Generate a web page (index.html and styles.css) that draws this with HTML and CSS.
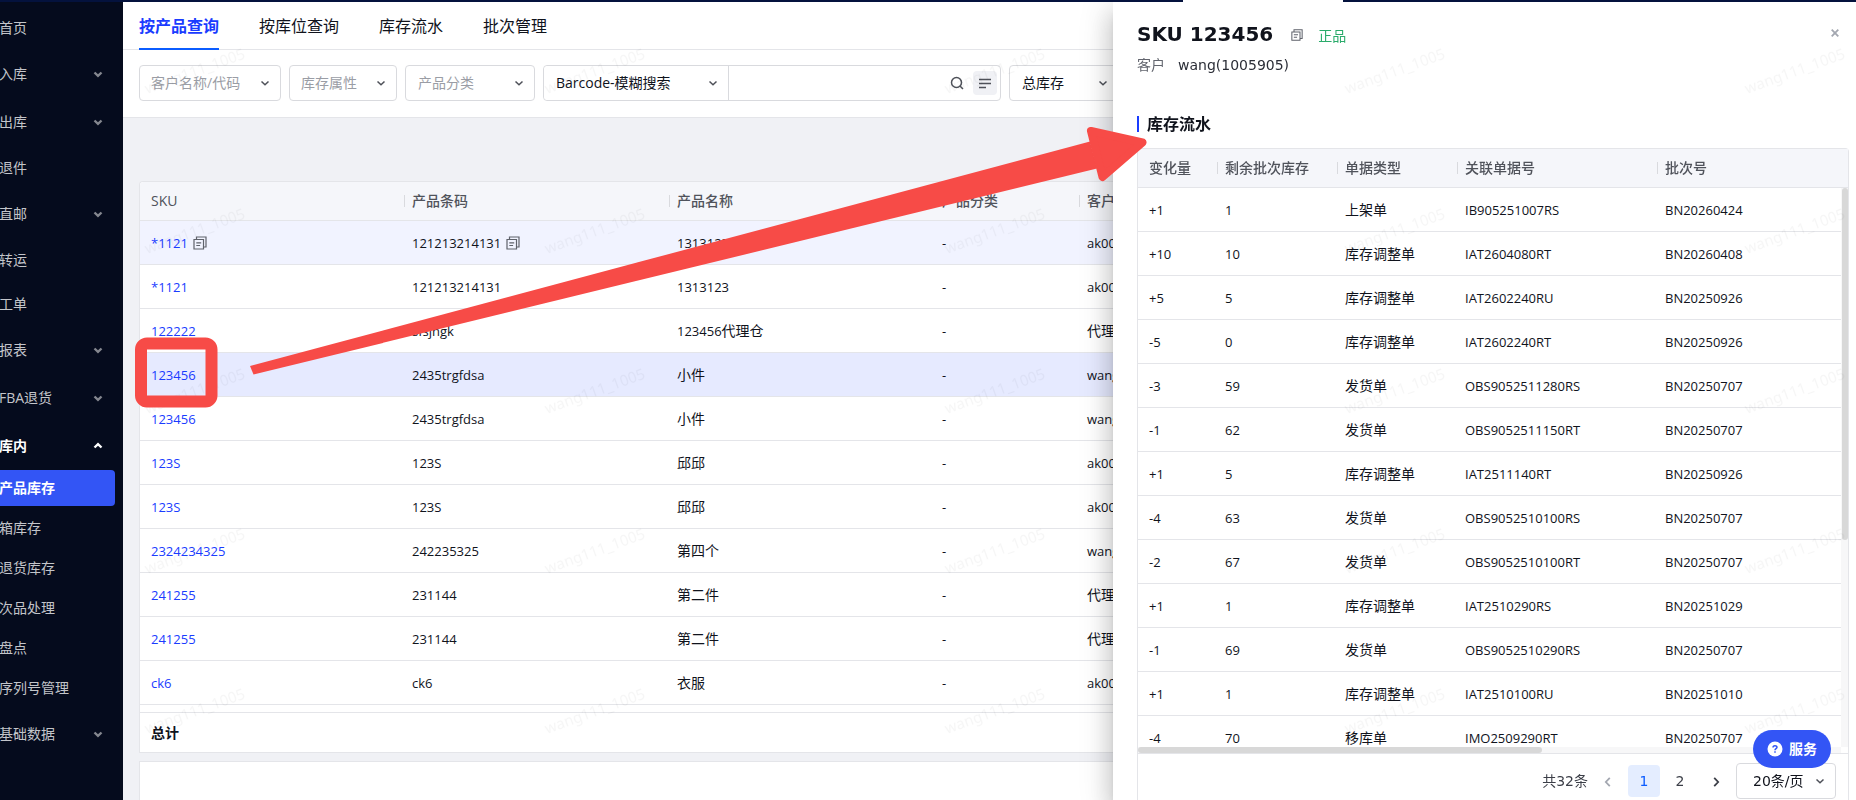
FILE: index.html
```html
<!DOCTYPE html>
<html lang="zh-CN">
<head>
    <meta charset="UTF-8">
    <meta name="viewport" content="width=device-width, initial-scale=1.0">
    <title>产品库存</title>
    <link rel="stylesheet" href="styles.css">
</head>
<body>
    <svg class="sprite" aria-hidden="true">
        <symbol id="down" viewBox="0 0 10 10"><path d="M1.5 3.5 5 6.8 8.5 3.5" fill="none" stroke="currentColor"/></symbol>
        <symbol id="copy" viewBox="0 0 14 14">
            <path d="M1 3.5h9.500v9.500H1zM3.500 3V1H13v10h-2" fill="none" stroke="currentColor" stroke-width="1.2"/>
            <path d="M3.300 6.800h4.900M3.300 9.500h3.800" fill="none" stroke="currentColor" stroke-width="1.2"/>
        </symbol>
    </svg>

    <div class="topbar"><span class="topbar-tab"></span></div>

    <div class="layout">
        <nav class="sidebar">
            <ul class="menu">
                <li class="menu-item"><a href="#">首页</a></li>
                <li class="menu-item has-sub"><a href="#">入库</a><svg><use href="#down"/></svg></li>
                <li class="menu-item has-sub"><a href="#">出库</a><svg><use href="#down"/></svg></li>
                <li class="menu-item"><a href="#">退件</a></li>
                <li class="menu-item has-sub"><a href="#">直邮</a><svg><use href="#down"/></svg></li>
                <li class="menu-item"><a href="#">转运</a></li>
                <li class="menu-item"><a href="#">工单</a></li>
                <li class="menu-item has-sub"><a href="#">报表</a><svg><use href="#down"/></svg></li>
                <li class="menu-item has-sub"><a href="#">FBA退货</a><svg><use href="#down"/></svg></li>
                <li class="menu-item has-sub open"><a href="#">库内</a><svg><use href="#down"/></svg></li>
            </ul>
            <ul class="submenu">
                <li><a class="active" href="#">产品库存</a></li>
                <li><a href="#">箱库存</a></li>
                <li><a href="#">退货库存</a></li>
                <li><a href="#">次品处理</a></li>
                <li><a href="#">盘点</a></li>
                <li><a href="#">序列号管理</a></li>
            </ul>
            <ul class="menu">
                <li class="menu-item has-sub"><a href="#">基础数据</a><svg><use href="#down"/></svg></li>
            </ul>
        </nav>

        <main class="content">
            <div class="tabs">
                <a class="tab active" href="#">按产品查询</a>
                <a class="tab" href="#">按库位查询</a>
                <a class="tab" href="#">库存流水</a>
                <a class="tab" href="#">批次管理</a>
            </div>

            <form class="filters">
                <div class="select customer">
                    <select aria-label="客户名称/代码"><option>客户名称/代码</option></select>
                    <svg><use href="#down"/></svg>
                </div>
                <div class="select attr">
                    <select aria-label="库存属性"><option>库存属性</option></select>
                    <svg><use href="#down"/></svg>
                </div>
                <div class="select category">
                    <select aria-label="产品分类"><option>产品分类</option></select>
                    <svg><use href="#down"/></svg>
                </div>
                <div class="search">
                    <div class="select chosen mode">
                        <select aria-label="搜索方式"><option>Barcode-模糊搜索</option></select>
                        <svg><use href="#down"/></svg>
                    </div>
                    <input type="text" aria-label="搜索">
                    <button type="button" aria-label="搜索">
                        <svg viewBox="0 0 24 24"><circle cx="11.500" cy="11.500" r="5" fill="none" stroke="currentColor" stroke-width="1.5"/><path d="M15 15l3 3" stroke="currentColor" stroke-width="1.5"/></svg>
                    </button>
                    <button type="button" class="multi" aria-label="批量搜索">
                        <svg viewBox="0 0 24 24"><path d="M6 8.500h12M6 12.500h12M6 16.500h7" stroke="currentColor" stroke-width="1.5"/></svg>
                    </button>
                </div>
                <div class="select chosen total-stock">
                    <select aria-label="总库存"><option>总库存</option></select>
                    <svg><use href="#down"/></svg>
                </div>
            </form>

            <div class="panel">
                <table class="grid stock">
                    <colgroup><col class="w265"><col class="w265"><col class="w265"><col class="w145"><col></colgroup>
                    <thead>
                        <tr><th>SKU</th><th>产品条码</th><th>产品名称</th><th>产品分类</th><th>客户</th></tr>
                    </thead>
                    <tbody>
                        <tr class="hover"><td><a href="#">*1121</a><svg class="copy"><use href="#copy"/></svg></td><td>121213214131<svg class="copy"><use href="#copy"/></svg></td><td>1313123</td><td>-</td><td>ak001</td></tr>
                        <tr><td><a href="#">*1121</a></td><td>121213214131</td><td>1313123</td><td>-</td><td>ak001</td></tr>
                        <tr><td><a href="#">122222</a></td><td>sfsjhgk</td><td>123456<span class="cn">代理仓</span></td><td>-</td><td class="cn">代理仓</td></tr>
                        <tr class="current"><td><a href="#">123456</a></td><td>2435trgfdsa</td><td class="cn">小件</td><td>-</td><td>wang</td></tr>
                        <tr><td><a href="#">123456</a></td><td>2435trgfdsa</td><td class="cn">小件</td><td>-</td><td>wang</td></tr>
                        <tr><td><a href="#">123S</a></td><td>123S</td><td class="cn">邱邱</td><td>-</td><td>ak001</td></tr>
                        <tr><td><a href="#">123S</a></td><td>123S</td><td class="cn">邱邱</td><td>-</td><td>ak001</td></tr>
                        <tr><td><a href="#">2324234325</a></td><td>242235325</td><td class="cn">第四个</td><td>-</td><td>wang</td></tr>
                        <tr><td><a href="#">241255</a></td><td>231144</td><td class="cn">第二件</td><td>-</td><td class="cn">代理仓</td></tr>
                        <tr><td><a href="#">241255</a></td><td>231144</td><td class="cn">第二件</td><td>-</td><td class="cn">代理仓</td></tr>
                        <tr><td><a href="#">ck6</a></td><td>ck6</td><td class="cn">衣服</td><td>-</td><td>ak001</td></tr>
                    </tbody>
                </table>
                <div class="summary">总计</div>
                <div class="panel-footer"></div>
            </div>
        </main>
    </div>

    <aside class="drawer">
        <button type="button" class="close" aria-label="关闭">
            <svg viewBox="0 0 8 8"><path d="M.7.7l6.600 6.600M7.300.7L.7 7.300" stroke="currentColor" stroke-width="1.800"/></svg>
        </button>
        <header class="drawer-head">
            <h1>SKU 123456</h1>
            <svg class="copy"><use href="#copy"/></svg>
            <span class="tag">正品</span>
        </header>
        <p class="customer-line"><span>客户</span>wang(1005905)</p>
        <h2>库存流水</h2>
        <div class="flow">
            <table class="grid flow-head">
                <colgroup><col class="w80"><col class="w120"><col class="w120"><col class="w200"><col></colgroup>
                <thead>
                    <tr><th>变化量</th><th>剩余批次库存</th><th>单据类型</th><th>关联单据号</th><th>批次号</th></tr>
                </thead>
            </table>
            <div class="flow-body">
                <table class="grid">
                    <colgroup><col class="w80"><col class="w120"><col class="w120"><col class="w200"><col></colgroup>
                    <tbody>
                        <tr><td>+1</td><td>1</td><td class="cn">上架单</td><td>IB905251007RS</td><td>BN20260424</td></tr>
                        <tr><td>+10</td><td>10</td><td class="cn">库存调整单</td><td>IAT2604080RT</td><td>BN20260408</td></tr>
                        <tr><td>+5</td><td>5</td><td class="cn">库存调整单</td><td>IAT2602240RU</td><td>BN20250926</td></tr>
                        <tr><td>-5</td><td>0</td><td class="cn">库存调整单</td><td>IAT2602240RT</td><td>BN20250926</td></tr>
                        <tr><td>-3</td><td>59</td><td class="cn">发货单</td><td>OBS9052511280RS</td><td>BN20250707</td></tr>
                        <tr><td>-1</td><td>62</td><td class="cn">发货单</td><td>OBS9052511150RT</td><td>BN20250707</td></tr>
                        <tr><td>+1</td><td>5</td><td class="cn">库存调整单</td><td>IAT2511140RT</td><td>BN20250926</td></tr>
                        <tr><td>-4</td><td>63</td><td class="cn">发货单</td><td>OBS9052510100RS</td><td>BN20250707</td></tr>
                        <tr><td>-2</td><td>67</td><td class="cn">发货单</td><td>OBS9052510100RT</td><td>BN20250707</td></tr>
                        <tr><td>+1</td><td>1</td><td class="cn">库存调整单</td><td>IAT2510290RS</td><td>BN20251029</td></tr>
                        <tr><td>-1</td><td>69</td><td class="cn">发货单</td><td>OBS9052510290RS</td><td>BN20250707</td></tr>
                        <tr><td>+1</td><td>1</td><td class="cn">库存调整单</td><td>IAT2510100RU</td><td>BN20251010</td></tr>
                        <tr><td>-4</td><td>70</td><td class="cn">移库单</td><td>IMO2509290RT</td><td>BN20250707</td></tr>
                    </tbody>
                </table>
            </div>
            <div class="track-y"><div class="thumb"></div></div>
            <div class="track-x"><div class="thumb"></div></div>
            <div class="pager">
                <span class="pager-total">共32条</span>
                <button type="button" class="prev" aria-label="上一页"><svg><use href="#down"/></svg></button>
                <button type="button" class="active">1</button>
                <button type="button">2</button>
                <button type="button" class="next" aria-label="下一页"><svg><use href="#down"/></svg></button>
                <div class="select chosen page-size">
                    <select aria-label="每页条数"><option>20条/页</option></select>
                    <svg><use href="#down"/></svg>
                </div>
            </div>
        </div>
    </aside>

    <button type="button" class="service">
        <svg viewBox="0 0 16 16"><circle cx="8" cy="8" r="7.500" fill="#fff"/><path d="M6 6.600c0-2.600 4-2.500 4-.3C10 7.700 8 7.700 8 9.200M8 10.300v1.500" fill="none" stroke="#3355f5" stroke-width="1.500"/></svg>
        服务
    </button>

    <!-- user watermark, repeated every 400x160 -->
    <svg class="watermark" aria-hidden="true">
        <defs>
            <pattern id="mark" x="123" width="400" height="160" patternUnits="userSpaceOnUse">
                <text x="24" y="94" transform="rotate(-20 24 94)">wang111_1005</text>
            </pattern>
        </defs>
        <rect width="100%" height="100%" fill="url(#mark)"/>
    </svg>

    <svg class="callout" aria-hidden="true">
        <rect x="141" y="343.500" width="70.500" height="58" rx="6" fill="none" stroke="#f74b47" stroke-width="12"/>
        <path d="M250 366 1090 141.500 1097 168.500 253.500 374.500z" fill="#f74b47"/>
        <path d="M1091 131 1142.500 142.500 1102.500 177z" fill="#f74b47" stroke="#f74b47" stroke-width="8" stroke-linejoin="round"/>
    </svg>
</body>
</html>
```

FILE: styles.css
```css
* {
    box-sizing: border-box;
}
body {
    margin: 0;
    height: 100vh;
    display: flex;
    flex-direction: column;
    overflow: hidden;
    font-family: "Open Sans", "Noto Sans CJK SC", sans-serif;
    font-size: 14px;
    line-height: 20px;
    color: #10131c;
    background-color: #f0f1f5;
}
ul {
    list-style: none;
    margin: 0;
    padding: 0;
}
a {
    color: inherit;
    text-decoration: none;
}
button, select, input {
    font: inherit;
    color: inherit;
    border: none;
    background: none;
    padding: 0;
    margin: 0;
}
svg {
    width: 10px;
    height: 10px;
    flex: none;
    stroke-width: 1.5;
}
.sprite {
    position: absolute;
    width: 0;
    height: 0;
}
.topbar {
    position: relative;
    z-index: 3;
    display: flex;
    justify-content: flex-end;
    height: 2px;
    flex: none;
    padding-right: 513px;
    background-color: #04123d;
}
.topbar-tab {
    width: 160px;
    background-color: white;
}
.layout {
    display: flex;
    flex: 1;
    min-height: 0;
}

/* sidebar */
.sidebar {
    position: relative;
    z-index: 3;
    width: 123px;
    flex: none;
    padding-top: 4px;
    background-color: #050b1d;
    color: #c3c5ca;
}
.menu-item {
    display: flex;
    align-items: center;
    justify-content: space-between;
    height: 44px;
    padding-right: 20px;
}
.menu-item.has-sub {
    height: 48px;
}
.menu-item a {
    margin-left: -1px;
}
.menu-item svg {
    color: #84878f;
    stroke-width: 2.4;
}
.menu-item.open {
    color: white;
    font-weight: bold;
}
.menu-item.open svg {
    color: white;
    transform: rotate(180deg);
}
.submenu a {
    display: block;
    height: 36px;
    line-height: 36px;
    margin: 0 8px 4px -1px;
    border-radius: 0 4px 4px 0;
}
.submenu a.active {
    background-color: #3355f5;
    color: white;
    font-weight: bold;
}

/* tabs and filters */
.content {
    display: flex;
    flex-direction: column;
    flex: 1;
    min-width: 0;
}
.tabs {
    display: flex;
    gap: 40px;
    padding: 0 16px;
    height: 48px;
    flex: none;
    background-color: white;
    border-bottom: 1px solid #e4e5e9;
    font-size: 16px;
    line-height: 48px;
}
.tab {
    height: 48px;
}
.tab.active {
    color: #1a3cff;
    font-weight: bold;
    border-bottom: 2px solid #0b5cff;
}
.filters {
    display: flex;
    gap: 8px;
    padding: 15px 16px 16px;
    background-color: white;
    border-bottom: 1px solid #e4e5e9;
}
.select {
    position: relative;
    height: 36px;
    border: 1px solid #d9dade;
    border-radius: 4px;
    background-color: white;
    color: #9a9da5;
}
.select.chosen {
    color: #10131c;
}
.select select {
    appearance: none;
    width: 100%;
    height: 34px;
    padding: 0 24px 0 11px;
}
.select svg {
    position: absolute;
    right: 10px;
    top: 12px;
    color: #4e5159;
    pointer-events: none;
}
.select.customer {
    width: 142px;
}
.select.attr {
    width: 108px;
}
.select.category {
    width: 130px;
}
.select.category select, .select.total-stock select {
    padding-left: 12px;
}
.select.total-stock {
    width: 110px;
}
.search {
    display: flex;
    align-items: center;
    gap: 4px;
    width: 458px;
    height: 36px;
    padding-right: 3px;
    border: 1px solid #d9dade;
    border-radius: 4px;
}
.search .mode {
    width: 185px;
    height: 34px;
    border-width: 0 1px 0 0;
    border-radius: 4px 0 0 4px;
}
.search .mode select {
    padding-left: 12px;
}
.search input {
    flex: 1;
    min-width: 0;
    height: 34px;
    outline: none;
}
.search button {
    width: 24px;
    height: 24px;
    border-radius: 4px;
    color: #4e5159;
}
.search button svg {
    display: block;
    width: 24px;
    height: 24px;
}
.search .multi {
    background-color: #f0f1f5;
}

/* tables */
.panel {
    display: flex;
    flex-direction: column;
    flex: 1;
    padding: 63px 16px 0;
}
.grid {
    width: 100%;
    table-layout: fixed;
    border-collapse: separate;
    border-spacing: 0;
    background-color: white;
}
.w265 {
    width: 265px;
}
.w200 {
    width: 200px;
}
.w145 {
    width: 145px;
}
.w120 {
    width: 120px;
}
.w80 {
    width: 80px;
}
.grid th {
    height: 39px;
    padding: 0 7px;
    text-align: left;
    font-weight: 500;
    color: #50535b;
    background: linear-gradient(#d9dade, #d9dade) no-repeat right center / 1px 12px #f5f6fa;
    border-bottom: 1px solid #e4e5e9;
}
.grid th:last-child {
    background-image: none;
}
.grid td {
    height: 44px;
    padding: 0 7px;
    font-size: 13px;
    white-space: nowrap;
    border-bottom: 1px solid #e4e5e9;
}
.grid th:first-child, .grid td:first-child {
    padding-left: 11px;
}
.grid .cn {
    font-size: 14px;
}
.grid td a {
    color: #1a3cff;
}
.grid .hover td {
    background-color: #f1f3ff;
}
.grid .current td {
    background-color: #e6eaff;
}
.copy {
    width: 14px;
    height: 14px;
    color: #5f626b;
}
.grid .copy {
    margin-left: 5px;
    vertical-align: -2px;
}
.stock {
    border: 1px solid #e4e5e9;
    border-bottom: none;
    border-radius: 4px 4px 0 0;
}
.stock th:first-child {
    border-top-left-radius: 4px;
}
.summary {
    height: 48px;
    padding: 7px 11px 0;
    line-height: 42px;
    font-weight: bold;
    border: 1px solid #e4e5e9;
    border-top: none;
    background: linear-gradient(#e4e5e9, #e4e5e9) no-repeat 0 7px / 100% 1px white;
}
.panel-footer {
    flex: 1;
    margin-top: 8px;
    border: 1px solid #e4e5e9;
    border-bottom: none;
    background-color: white;
}

/* drawer */
.drawer {
    position: fixed;
    top: 2px;
    right: 0;
    bottom: 0;
    z-index: 2;
    display: flex;
    flex-direction: column;
    width: 743px;
    padding: 16px 7px 0 24px;
    background-color: white;
    box-shadow: 0 8px 10px -5px rgba(0, 0, 0, 0.2), 0 16px 24px 2px rgba(0, 0, 0, 0.14), 0 6px 30px 5px rgba(0, 0, 0, 0.12);
}
.close {
    position: absolute;
    top: 22px;
    right: 13px;
    width: 16px;
    height: 16px;
    color: #a3a7b0;
    line-height: 1;
}
.close svg {
    width: 8px;
    height: 8px;
}
.drawer-head {
    display: flex;
    align-items: center;
    height: 32px;
}
.drawer-head .copy {
    width: 12px;
    height: 12px;
    margin: 2px 15px 0 18px;
    stroke-width: 2;
}
.drawer h1 {
    margin: 0;
    font-family: "DejaVu Sans", "Noto Sans CJK SC", sans-serif;
    font-size: 20px;
    font-weight: bold;
}
.tag {
    padding-top: 3px;
    color: #2bab6b;
}
.customer-line {
    margin: 5px 0 0;
    font-family: "DejaVu Sans", "Noto Sans CJK SC", sans-serif;
    line-height: 20px;
    color: #2b2e37;
}
.customer-line span {
    margin-right: 13px;
    color: #62656e;
}
.drawer h2 {
    margin: 41px 0 16px;
    padding-left: 8px;
    border-left: 2px solid #1a3cff;
    font-size: 16px;
    line-height: 16px;
}
.flow {
    display: grid;
    grid-template-columns: 1fr 7px;
    grid-template-rows: auto 1fr 6px auto;
    flex: 1;
    min-height: 0;
    border: 1px solid #e4e5e9;
    border-bottom: none;
    border-radius: 4px 4px 0 0;
}
.flow-head {
    grid-column: 1 / 3;
}
.flow-body {
    overflow: hidden;
}
.track-x, .track-y {
    background-color: #f7f7f8;
}
.thumb {
    background-color: #d8d8d8;
    border-radius: 3px;
}
.track-y .thumb {
    height: 63%;
    margin-left: 1px;
}
.track-x .thumb {
    width: 57.5%;
    height: 6px;
}
.pager {
    grid-column: 1 / 3;
    display: flex;
    align-items: center;
    justify-content: flex-end;
    gap: 4px;
    padding: 9px 12px 1px 0;
    border-top: 1px solid #e4e5e9;
    font-family: "DejaVu Sans", "Noto Sans CJK SC", sans-serif;
    color: #3c3f48;
}
.pager button {
    width: 32px;
    height: 32px;
    border-radius: 4px;
}
.pager button.active {
    background-color: #e4edff;
    color: #0b5cff;
}
.pager .prev {
    color: #a3a7b0;
}
.pager .prev svg {
    transform: rotate(90deg);
}
.pager .next svg {
    transform: rotate(-90deg);
}
.pager button svg {
    width: 12px;
    height: 12px;
    vertical-align: middle;
}
.page-size {
    width: 100px;
}
.page-size select {
    padding: 0 24px 0 16px;
}
.service {
    position: fixed;
    right: 25px;
    bottom: 32px;
    z-index: 5;
    display: flex;
    align-items: center;
    justify-content: center;
    gap: 6px;
    width: 78px;
    height: 38px;
    border-radius: 19px;
    background-color: #3355f5;
    color: white;
    font-weight: bold;
}
.service svg {
    width: 16px;
    height: 16px;
}

/* overlays */
.watermark, .callout {
    position: fixed;
    top: 0;
    left: 0;
    width: 100%;
    height: 100%;
    pointer-events: none;
}
.watermark {
    z-index: 2;
    font-family: "Noto Sans", sans-serif;
    font-size: 15px;
    fill: rgba(0, 0, 0, 0.035);
}
.callout {
    z-index: 6;
}
```
